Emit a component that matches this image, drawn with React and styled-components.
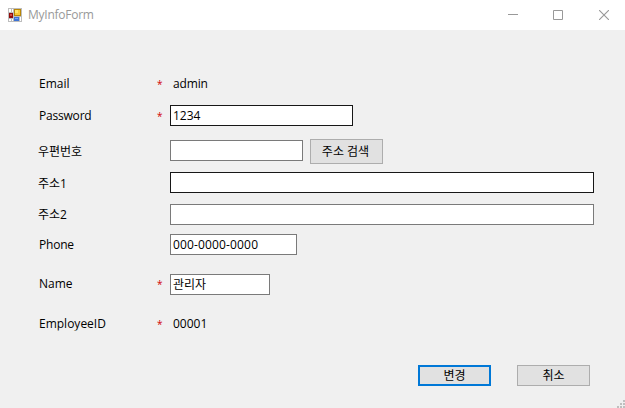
import React from "react";
import styled, { createGlobalStyle } from "styled-components";

const GlobalStyle = createGlobalStyle`
  * { box-sizing: border-box; }
  body { margin: 0; background: #f0f0f0; }
`;

const Window = styled.main`
  position: relative;
  width: 625px;
  height: 408px;
  overflow: hidden;
  background: #f0f0f0;
  color: #000;
  font: 12px/16px "Open Sans", "Noto Sans CJK KR", sans-serif;
`;

const TitleBar = styled.header`
  display: flex;
  align-items: center;
  height: 30px;
  padding-left: 8px;
  background: #fff;
`;

const Title = styled.h1`
  flex: 1;
  margin: 0 0 0 6px;
  padding-bottom: 1px;
  font-size: 12px;
  font-weight: 400;
  line-height: 16px;
  letter-spacing: -0.25px;
  color: #999;
`;

const CaptionButton = styled.button`
  display: flex;
  align-items: center;
  justify-content: center;
  width: ${(p) => p.$width || 46}px;
  height: 30px;
  padding: 0;
  border: 0;
  background: none;
  color: #999;
`;

const CloseButton = styled(CaptionButton)`
  width: 45px;
  padding: 0 0 1px 3px;
`;

const Form = styled.section`
  padding: 43px 0 0 38px;
`;

const Row = styled.div`
  display: grid;
  grid-template-columns: 117px 15px auto;
  align-items: center;
  justify-content: start;
  height: ${(p) => p.$height || 21}px;
  margin-bottom: ${(p) => p.$gap}px;
`;

const Label = styled.label`
  padding-top: ${(p) => (p.$lowered ? 2 : 0)}px;
  padding-left: ${(p) => (p.$korean ? 0 : 1)}px;
  padding-bottom: ${(p) => (p.$raised ? 2 : 0)}px;
  letter-spacing: ${(p) => p.$spacing || 0}px;
  white-space: nowrap;
  ${(p) => p.$clipped && "clip-path: inset(0 0 3px 0);"}
`;

const Required = styled.span`
  padding: ${(p) => (p.$raised ? 0 : 1)}px 0 ${(p) => (p.$raised ? 1 : 0)}px 2px;
  font-size: 10px;
  color: #d00000;
`;

const Value = styled.span`
  padding-left: 3px;
  padding-bottom: ${(p) => (p.$raised ? 2 : 0)}px;
  letter-spacing: ${(p) => p.$spacing || 0}px;
`;

const Field = styled.div`
  display: flex;
  align-items: center;
  width: ${(p) => p.$width}px;
  height: 21px;
  padding: 0 2px;
  border: 1px solid ${(p) => (p.$dark ? "#171717" : "#7a7a7a")};
  background: #fff;
  letter-spacing: ${(p) => p.$spacing || 0}px;
`;

const Inline = styled.div`
  display: flex;
  align-items: flex-start;
  gap: 7px;
  height: 25px;

  ${Field} { margin-top: 1px; }
`;

const Button = styled.button`
  display: flex;
  align-items: center;
  justify-content: center;
  width: 73px;
  height: ${(p) => p.$height || 21}px;
  padding: 0 ${(p) => (p.$height ? 2 : 0)}px 0 0;
  border: ${(p) => (p.$primary ? "2px solid #0078d7" : "1px solid #adadad")};
  background: #e1e1e1;
  color: #000;
  font: inherit;
`;

const Actions = styled.footer`
  display: flex;
  gap: 26px;
  padding-left: 380px;
`;

const Grip = styled.svg`
  position: absolute;
  right: 0;
  bottom: 0;
`;

function AppIcon() {
  return (
    <svg width="14" height="14" viewBox="0 0 14 14" shapeRendering="crispEdges">
      <rect width="14" height="14" fill="#bdbdbd" />
      <path d="M1 1h2v3H1zM4 1h1v3H4zM1 11h2v2H1zM4 11h1v2H4zM12 9h1v4h-1z" fill="#fff" />
      <rect x="1" y="5" width="4" height="5" fill="#900b0b" />
      <rect x="2" y="6" width="2" height="2" fill="#d74b3f" />
      <rect x="6" y="1" width="7" height="7" fill="#b88607" />
      <rect x="7" y="2" width="5" height="5" fill="#f7c936" />
      <rect x="7" y="2" width="3" height="3" fill="#ffe36b" />
      <rect x="6" y="9" width="5" height="4" fill="#3d73d6" />
      <rect x="7" y="10" width="3" height="1" fill="#79a9f5" />
    </svg>
  );
}

export default function App() {
  return (
    <Window>
      <GlobalStyle />
      <TitleBar>
        <AppIcon />
        <Title>MyInfoForm</Title>
        <CaptionButton aria-label="Minimize">
          <svg width="10" height="10" shapeRendering="crispEdges">
            <path d="M0 4h10v1H0z" fill="currentColor" />
          </svg>
        </CaptionButton>
        <CaptionButton aria-label="Maximize" $width={44}>
          <svg width="10" height="10">
            <path d="M.5 .5h9v9h-9z" fill="none" stroke="currentColor" />
          </svg>
        </CaptionButton>
        <CloseButton aria-label="Close">
          <svg width="10" height="10">
            <path d="M0 0l10 10M10 0L0 10" fill="none" stroke="currentColor" strokeWidth="1.1" />
          </svg>
        </CloseButton>
      </TitleBar>
      <Form>
        <Row $gap={11}>
          <Label>Email</Label>
          <Required>*</Required>
          <Value $spacing={-0.15}>admin</Value>
        </Row>
        <Row $gap={13}>
          <Label $spacing={-0.2}>Password</Label>
          <Required>*</Required>
          <Field $width={183} $dark>1234</Field>
        </Row>
        <Row $height={25} $gap={8}>
          <Label $korean>우편번호</Label>
          <span />
          <Inline>
            <Field $width={133} />
            <Button $height={25}>주소 검색</Button>
          </Inline>
        </Row>
        <Row $gap={11}>
          <Label $korean $lowered>주소1</Label>
          <span />
          <Field $width={424} $dark />
        </Row>
        <Row $gap={9}>
          <Label $korean>주소2</Label>
          <span />
          <Field $width={424} />
        </Row>
        <Row $gap={19}>
          <Label $spacing={-0.2}>Phone</Label>
          <span />
          <Field $width={127} $spacing={0.15}>000-0000-0000</Field>
        </Row>
        <Row $gap={19}>
          <Label $raised>Name</Label>
          <Required $raised>*</Required>
          <Field $width={100}>관리자</Field>
        </Row>
        <Row $gap={30}>
          <Label $raised $clipped>EmployeeID</Label>
          <Required $raised>*</Required>
          <Value $raised>00001</Value>
        </Row>
        <Actions>
          <Button $primary>변경</Button>
          <Button>취소</Button>
        </Actions>
      </Form>
      <Grip width="8" height="9" shapeRendering="crispEdges">
        <path d="M6 1h2v2H6zM3 4h2v2H3zM6 4h2v2H6zM0 7h2v2H0zM3 7h2v2H3zM6 7h2v2H6z" fill="#bfbfbf" />
      </Grip>
    </Window>
  );
}
